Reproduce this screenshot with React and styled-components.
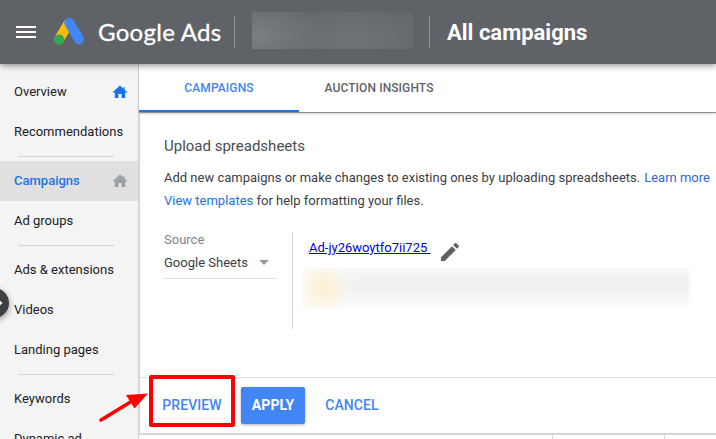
import React from 'react';
import styled, { createGlobalStyle } from 'styled-components';

const GlobalStyle = createGlobalStyle`
    * {
        box-sizing: border-box;
    }
    body {
        margin: 0;
        overflow: hidden;
        background: #fff;
        font-family: Roboto, 'Liberation Sans', sans-serif;
        color: #3c4043;
    }
`;

const Page = styled.div`
    position: relative;
    display: flex;
    flex-direction: column;
    width: 716px;
    height: 439px;
    overflow: hidden;
`;

const Header = styled.header`
    position: relative;
    z-index: 2;
    display: flex;
    align-items: center;
    flex: 0 0 64px;
    padding-left: 16px;
    background: #5f6368;
    box-shadow: 0 1px 7px rgba(0, 0, 0, 0.5);
    color: #fff;
`;

const MenuIcon = styled.svg`
    flex: none;
    width: 20px;
    height: 14px;
    margin-right: 18px;
`;

const Logo = styled.svg`
    flex: none;
    width: 30px;
    height: 28px;
    margin: -3px 14px 0 0;
`;

const Brand = styled.div`
    width: 124px;
    margin-right: 12px;
    font: 400 24px/32px Lato, sans-serif;
    white-space: nowrap;
    letter-spacing: 0.3px;
    -webkit-text-stroke: 0.3px #fff;
`;

const Separator = styled.div`
    flex: none;
    width: 1px;
    height: 32px;
    background: #94979a;
`;

const Account = styled.div`
    width: 161px;
    height: 37px;
    margin: -3px 16px 0 17px;
    background:
        radial-gradient(60px 42px at 8px 24px, #7a7d81 0%, rgba(122, 125, 129, 0) 100%),
        radial-gradient(80px 34px at 100px 28px, #707377 0%, rgba(112, 115, 119, 0) 100%),
        #64676c;
`;

const PageTitle = styled.h1`
    margin: 2px 0 0 17px;
    font-size: 22px;
    line-height: 32px;
    font-weight: 700;
    white-space: nowrap;
`;

const Body = styled.div`
    display: flex;
    flex: 1;
    min-height: 0;
`;

const Sidebar = styled.nav`
    flex: 0 0 139px;
    padding-top: 8px;
    background: #f4f4f4;
    border-right: 1px solid #d5d6d8;
    overflow: hidden;
`;

const NavItem = styled.div`
    display: flex;
    align-items: center;
    justify-content: space-between;
    height: 40px;
    padding: 0 10px 1px 14px;
    background: ${props => (props.$active ? '#e0e0e0' : 'transparent')};
    color: ${props => (props.$active ? '#1a73e8' : '#202124')};
    font-size: 13px;
    font-weight: ${props => (props.$active ? 500 : 400)};
    white-space: nowrap;
`;

const NavDivider = styled.div`
    height: 1px;
    margin: 4px 24px 4px 18px;
    background: #d2d4d6;
`;

const HomeIcon = styled.svg`
    flex: none;
    width: 16px;
    height: 14px;
    margin-top: 1px;
    fill: ${props => props.$color};
`;

const Main = styled.main`
    display: flex;
    flex-direction: column;
    flex: 1;
    min-width: 0;
`;

const Tabs = styled.div`
    display: flex;
    flex: 0 0 49px;
    border-bottom: 1px solid #8d8f92;
    box-shadow: 0 1px 2px rgba(0, 0, 0, 0.18);
`;

const Tab = styled.div`
    width: 160px;
    height: 48px;
    border-bottom: 2px solid ${props => (props.$active ? '#1a73e8' : 'transparent')};
    color: ${props => (props.$active ? '#4285f4' : '#5f6368')};
    font-size: 12px;
    font-weight: 500;
    line-height: 48px;
    letter-spacing: 0.1px;
    text-align: center;
`;

const Panel = styled.section`
    flex: 0 0 264px;
    padding: 22px 0 0 24px;
    border-left: 1px solid #d5d6d8;
`;

const PanelTitle = styled.h2`
    margin: 0 0 9px;
    font-size: 15px;
    line-height: 22px;
    font-weight: 400;
    color: #4a4d51;
`;

const Intro = styled.p`
    margin: 0;
    font-size: 13px;
    line-height: 23px;
    white-space: nowrap;
`;

const HelpLink = styled.a`
    color: ${props => props.$color || '#1a73e8'};
    margin-left: ${props => props.$gap || 0}px;
`;

const Form = styled.div`
    display: flex;
    margin-top: 20px;
`;

const Source = styled.div`
    width: 112px;
    margin-right: 16px;
    font-size: 13px;
`;

const Label = styled.div`
    line-height: 16px;
    color: #80868b;
`;

const Select = styled.div`
    display: flex;
    align-items: center;
    justify-content: space-between;
    height: 31px;
    padding: 0 7px 1px 0;
    border-bottom: 1px solid #dadce0;
`;

const Caret = styled.span`
    border: 5px solid transparent;
    border-top-color: #999;
    border-bottom: 0;
`;

const FileColumn = styled.div`
    height: 97px;
    padding-left: 9px;
    border-left: 1px solid #d5d6d8;
`;

const FileRow = styled.div`
    display: flex;
    height: 36px;
    padding: 6px 0 0 7px;
`;

const FileLink = styled.a`
    font-size: 13px;
    line-height: 20px;
    color: #0000ee;
    text-decoration: underline;
    white-space: pre;
`;

const PencilIcon = styled.svg`
    width: 18px;
    height: 18px;
    margin: 5px 0 0 11px;
    fill: #616161;
`;

const Redacted = styled.div`
    width: 390px;
    height: 41px;
    background:
        radial-gradient(circle at 22px 20px, #fdeed0 0, rgba(253, 238, 208, 0) 24px),
        linear-gradient(90deg, #fdfbf6 0, rgba(253, 251, 246, 0) 60px, rgba(255, 255, 255, 0) 384px, #fff 100%),
        linear-gradient(#f7f7f7 0, #efeff0 42%, #f7f7f7 75%, #fcfcfc 100%);
`;

const Footer = styled.div`
    display: flex;
    flex: none;
    height: 58px;
    padding: 9px 0 0 7px;
    border-top: 1px solid #dadce0;
    border-bottom: 2px solid #d5d6d8;
    border-left: 1px solid #d5d6d8;
`;

const Button = styled.button`
    width: ${props => props.$width}px;
    height: 37px;
    margin: 0 ${props => props.$gap || 0}px 0 0;
    padding: 0;
    border: 0;
    border-radius: 2px;
    background: ${props => (props.$filled ? '#4285f4' : 'transparent')};
    box-shadow: ${props => (props.$filled ? '0 1px 3px rgba(0, 0, 0, 0.3)' : 'none')};
    color: ${props => (props.$filled ? '#fff' : '#4285f4')};
    font: ${props => (props.$filled ? 700 : 500)} 14px/37px Roboto, sans-serif;
    letter-spacing: 0.1px;
`;

const TableHead = styled.div`
    display: grid;
    grid-template-columns: 414px 112px 1fr;
    flex: 1;
`;

const HeadCell = styled.div`
    border-right: 1px solid #d5d6d8;

    &:last-child {
        border-right: 0;
    }
`;

// floats over the edge of the sidebar
const Expand = styled.div`
    position: absolute;
    left: -21px;
    top: 288px;
    width: 30px;
    height: 30px;
    border-radius: 50%;
    background: #3c4043;
    box-shadow: 0 2px 6px rgba(0, 0, 0, 0.4);
`;

const ExpandArrow = styled.svg`
    position: absolute;
    right: 6px;
    top: 10px;
    width: 8px;
    height: 10px;
`;

const Highlight = styled.div`
    position: absolute;
    left: 149px;
    top: 375px;
    width: 86px;
    height: 52px;
    border: 4px solid #ff0000;
    border-radius: 2px;
`;

const Pointer = styled.svg`
    position: absolute;
    left: 97px;
    top: 390px;
    width: 54px;
    height: 34px;
`;

const nav = [
    { label: 'Overview', home: '#1a73e8' },
    { label: 'Recommendations' },
    { divider: true },
    { label: 'Campaigns', home: '#9aa0a6', active: true },
    { label: 'Ad groups' },
    { divider: true },
    { label: 'Ads & extensions' },
    { label: 'Videos' },
    { label: 'Landing pages' },
    { divider: true },
    { label: 'Keywords' },
    { label: 'Dynamic ad' },
]

const Home = ({ color }) => (
    <HomeIcon viewBox="0 0 16 14" $color={color}>
        <path d="M6.4 13V9h3.2v4h3.6V7.6h2.5L12.6 4.8V2.2h-1.4v1.3L8 .6.3 7.6h2.5V13z" />
    </HomeIcon>
)

const TopBar = () => (
    <Header>
        <MenuIcon viewBox="0 0 20 14">
            <path fill="#fff" d="M0 1h20v2H0zM0 6h20v2H0zM0 11h20v2H0z" />
        </MenuIcon>
        <Logo viewBox="0 0 30 28">
            <path stroke="#fbbc04" strokeWidth="10" d="M5 22.5 15 5.5" />
            <path
                stroke="#4285f4"
                strokeWidth="10"
                strokeLinecap="round"
                d="M15.2 5.8 25 22.4"
            />
            <circle cx="5.2" cy="22.6" r="5.1" fill="#34a853" />
        </Logo>
        <Brand>Google Ads</Brand>
        <Separator />
        <Account />
        <Separator />
        <PageTitle>All campaigns</PageTitle>
    </Header>
)

const SideNav = () => (
    <Sidebar>
        {nav.map((item, index) => (
            item.divider
                ? <NavDivider key={index} />
                : (
                    <NavItem key={index} $active={item.active}>
                        {item.label}
                        {item.home && <Home color={item.home} />}
                    </NavItem>
                )
        ))}
    </Sidebar>
)

const UploadPanel = () => (
    <Panel>
        <PanelTitle>Upload spreadsheets</PanelTitle>
        <Intro>
            Add new campaigns or make changes to existing ones by uploading spreadsheets.
            <HelpLink $gap={4} $color="#3367d6">Learn more</HelpLink>
        </Intro>
        <Intro>
            <HelpLink>View templates</HelpLink> for help formatting your files.
        </Intro>
        <Form>
            <Source>
                <Label>Source</Label>
                <Select>
                    Google Sheets
                    <Caret />
                </Select>
            </Source>
            <FileColumn>
                <FileRow>
                    <FileLink>{'Ad-jy26woytfo7ii725 '}</FileLink>
                    <PencilIcon viewBox="3 3 18 18">
                        <path d="M3 17.25V21h3.75L17.81 9.94l-3.75-3.75L3 17.25zM20.71 7.04a1 1 0 0 0 0-1.41l-2.34-2.34a1 1 0 0 0-1.41 0l-1.83 1.83 3.75 3.75 1.83-1.83z" />
                    </PencilIcon>
                </FileRow>
                <Redacted />
            </FileColumn>
        </Form>
    </Panel>
)

const App = () => (
    <Page>
        <GlobalStyle />
        <TopBar />
        <Body>
            <SideNav />
            <Main>
                <Tabs>
                    <Tab $active>CAMPAIGNS</Tab>
                    <Tab>AUCTION INSIGHTS</Tab>
                </Tabs>
                <UploadPanel />
                <Footer>
                    <Button $width={90} $gap={4}>PREVIEW</Button>
                    <Button $width={64} $gap={3} $filled>APPLY</Button>
                    <Button $width={88}>CANCEL</Button>
                </Footer>
                <TableHead>
                    <HeadCell />
                    <HeadCell />
                    <HeadCell />
                </TableHead>
            </Main>
        </Body>
        <Expand>
            <ExpandArrow viewBox="0 0 8 10">
                <path fill="#fff" d="M0 3.6h3V0.8L7.6 5 3 9.2V6.4H0z" />
            </ExpandArrow>
        </Expand>
        <Highlight />
        <Pointer viewBox="0 0 54 34">
            <path stroke="#ff0000" strokeWidth="3.6" strokeLinecap="round" d="M4 30 36 10.5" />
            <path fill="#ff0000" d="M51 3.5 29 5 37.5 18.5z" />
        </Pointer>
    </Page>
)

export default App;
